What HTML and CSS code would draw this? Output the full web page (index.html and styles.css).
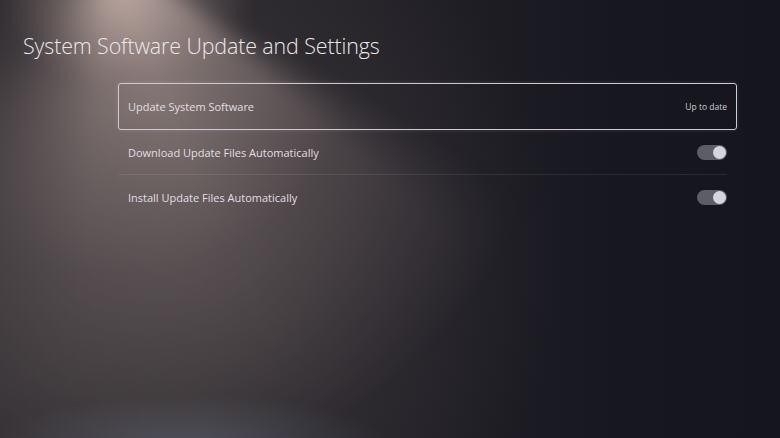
FILE: index.html
```html
<!DOCTYPE html>
<html>
<head>
<meta charset="utf-8">
<link rel="stylesheet" href="styles.css">
</head>
<body>
<div class="screen">
  <h1 class="title">System Software Update and Settings</h1>
  <div class="list">
    <div class="row focused">
      <span class="label">Update System Software</span>
      <span class="value">Up to date</span>
    </div>
    <div class="row divided">
      <span class="label">Download Update Files Automatically</span>
      <span class="toggle"><span class="knob"></span></span>
    </div>
    <div class="row">
      <span class="label">Install Update Files Automatically</span>
      <span class="toggle"><span class="knob"></span></span>
    </div>
  </div>
</div>
</body>
</html>
```
FILE: styles.css
```css
html, body { margin: 0; padding: 0; }
body {
  width: 780px; height: 438px; overflow: hidden;
  font-family: "Open Sans", "Noto Sans", sans-serif;
  background: #17171f;
}
.screen {
  position: relative;
  width: 780px; height: 438px; box-sizing: border-box;
  padding: 31px 0 0 23px;
  overflow: hidden;
  background:
    radial-gradient(ellipse 200px 50px at 190px 445px, rgba(100,110,128,0.45), rgba(100,110,128,0) 100%),
    radial-gradient(ellipse 400px 400px at 160px 260px, rgba(72,66,70,0.65), rgba(72,66,70,0) 100%),
    linear-gradient(90deg, #2c292d 0%, #2a272b 25%, #211f26 55%, #16171f 80%, #14151d 100%);
}
.screen::before {
  content: "";
  position: absolute; left: -100px; top: -100px; width: 900px; height: 700px;
  background:
    radial-gradient(ellipse 130px 90px at 225px 95px, rgba(225,200,190,0.6), rgba(225,200,190,0) 100%),
    conic-gradient(from 0deg at 210px 50px,
      rgba(175,155,150,0) 0deg,
      rgba(175,155,150,0) 120deg,
      rgba(180,160,155,0.65) 130deg,
      rgba(180,160,155,0.8) 160deg,
      rgba(180,160,155,0.7) 185deg,
      rgba(175,155,150,0.4) 205deg,
      rgba(175,155,150,0.12) 222deg,
      rgba(175,155,150,0) 240deg,
      rgba(175,155,150,0) 360deg);
  -webkit-mask-image: radial-gradient(ellipse 480px 540px at 210px 50px, #000 0%, rgba(0,0,0,0.75) 30%, rgba(0,0,0,0.3) 60%, transparent 100%);
  mask-image: radial-gradient(ellipse 480px 540px at 210px 50px, #000 0%, rgba(0,0,0,0.75) 30%, rgba(0,0,0,0.3) 60%, transparent 100%);
  filter: blur(8px);
  pointer-events: none;
}
.title, .list { position: relative; }
.title {
  margin: 0;
  font-size: 21.4px; font-weight: 300; color: #ece8ea;
  line-height: 30px; letter-spacing: -0.1px;
}
.list {
  margin: 22px 0 0 95px;
  width: 619px;
  display: flex; flex-direction: column;
}
.row {
  height: 45px; box-sizing: border-box;
  display: flex; align-items: center; justify-content: space-between;
  padding: 0 10px 0 10px;
  color: #e2dfe2; font-size: 11px;
}
.row.focused {
  height: 47px;
  border: 1.5px solid #cfc8d0; border-radius: 3px;
  box-shadow: 0 0 4px rgba(255,255,255,0.15);
  padding: 0 9px 0 9px;
}
.row.divided { border-bottom: 1px solid rgba(255,255,255,0.09); margin-right: 10px; padding-right: 0; }
.row.divided + .row { margin-right: 10px; padding-right: 0; }
.value { font-size: 8.5px; color: #cfcdd3; }
.toggle {
  width: 30px; height: 15px; border-radius: 8px;
  background: #5d5d66;
  display: flex; align-items: center; justify-content: flex-end;
  padding: 0 1px; box-sizing: border-box;
}
.knob { width: 13px; height: 13px; border-radius: 50%; background: #d6d5dc; }
```
